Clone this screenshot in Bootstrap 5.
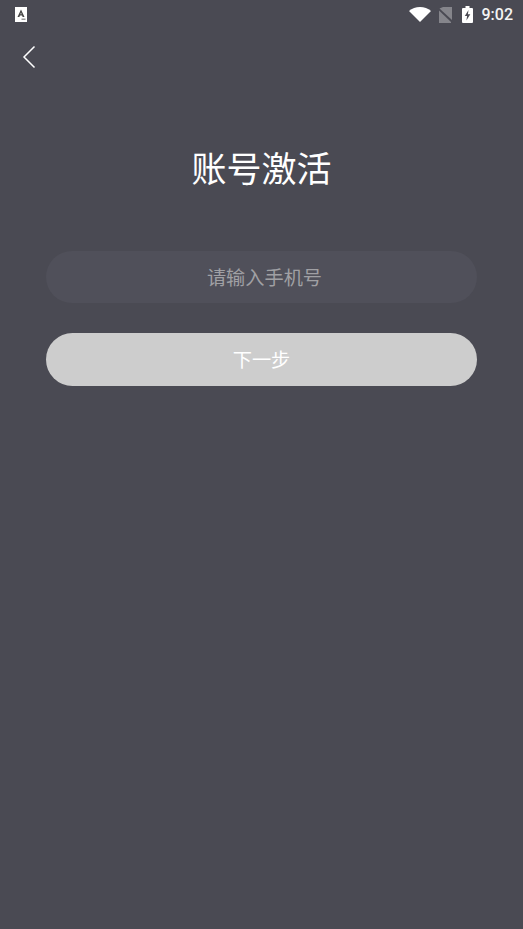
<!doctype html>
<html lang="zh"><head><meta charset="utf-8">
<link href="https://cdn.jsdelivr.net/npm/bootstrap@5.3.0/dist/css/bootstrap.min.css" rel="stylesheet">
<style>
html,body{height:100%}
body{background:#4a4a53;font-family:"Noto Sans CJK SC","Liberation Sans",sans-serif;color:#fff}
.status-bar{height:29px;padding:0 10px 0 15px}
.app-mark{width:12px;height:15px}
.wifi-icon{margin-right:7px}
.sim-icon{margin-right:9px}
.clock{font-family:Roboto,"Liberation Sans",sans-serif;font-size:16px;line-height:1;color:#f4f4f4;margin-left:9px;font-weight:500}
.back-row{height:56px;padding-left:22px}
.title-text{font-size:35px;font-weight:400;line-height:48px;margin:58px 0 60px}
.form-col{padding:0 46px}
.phone-input.form-control{height:52px;background:#50505a;border:0;border-radius:26px;text-align:center;font-size:19.2px;font-weight:400;color:#fff;padding:0 0 0 6px;box-shadow:none}
.phone-input.form-control::placeholder{color:#a0a0a4;opacity:1}
.next-btn.btn{height:53px;margin-top:30px;background:#cdcdcd;border:0;border-radius:26.5px;color:#fff;font-size:19.2px;font-weight:400;padding:0;opacity:1}
</style></head>
<body>
<div class="status-bar d-flex align-items-center">
  <svg class="app-mark" viewBox="0 0 12 15"><rect width="12" height="15" fill="#fff"/><path d="M6 2.500 2.500 10h1.900l.5-1.400h2.200L7.600 10h1.900zM5.400 7.200 6 5.500l.6 1.700z" fill="#444" fill-rule="evenodd"/><rect x="6.500" y="11.500" width="4" height="1.500" fill="#999"/></svg>
  <div class="ms-auto d-flex align-items-center">
    <svg class="wifi-icon" width="22" height="15" viewBox="0 0 22 15"><path d="M0 4C3 1.400 6.800 0 11 0s8 1.400 11 4L11 15z" fill="#fff"/></svg>
    <svg class="sim-icon" width="15" height="16" viewBox="0 0 15 16"><path d="M5 0h9v13L1.500 1.500 5 0z" fill="#85858b"/><path d="M1 3.500 13 15v1H1z" fill="#85858b"/></svg>
    <svg width="11" height="17" viewBox="0 0 11 17"><path d="M3.500 0h4v2H10a1 1 0 0 1 1 1v13a1 1 0 0 1-1 1H1a1 1 0 0 1-1-1V3a1 1 0 0 1 1-1h2.500z" fill="#fff"/><path d="M6.500 4 2.800 10h2.300l-.7 4.500L8.300 8.200H5.900z" fill="#4a4a53"/></svg>
    <span class="clock">9:02</span>
  </div>
</div>
<div class="back-row d-flex align-items-center">
  <svg width="14" height="24" viewBox="0 0 14 24"><path d="M12.500 1.500 2 12l10.500 10.500" fill="none" stroke="#fff" stroke-width="1.500"/></svg>
</div>
<h1 class="title-text text-center">账号激活</h1>
<form class="form-col d-flex flex-column">
  <input class="phone-input form-control" type="text" placeholder="请输入手机号">
  <button type="button" class="next-btn btn w-100">下一步</button>
</form>
<script src="https://cdn.jsdelivr.net/npm/bootstrap@5.3.0/dist/js/bootstrap.bundle.min.js"></script>
</body></html>
